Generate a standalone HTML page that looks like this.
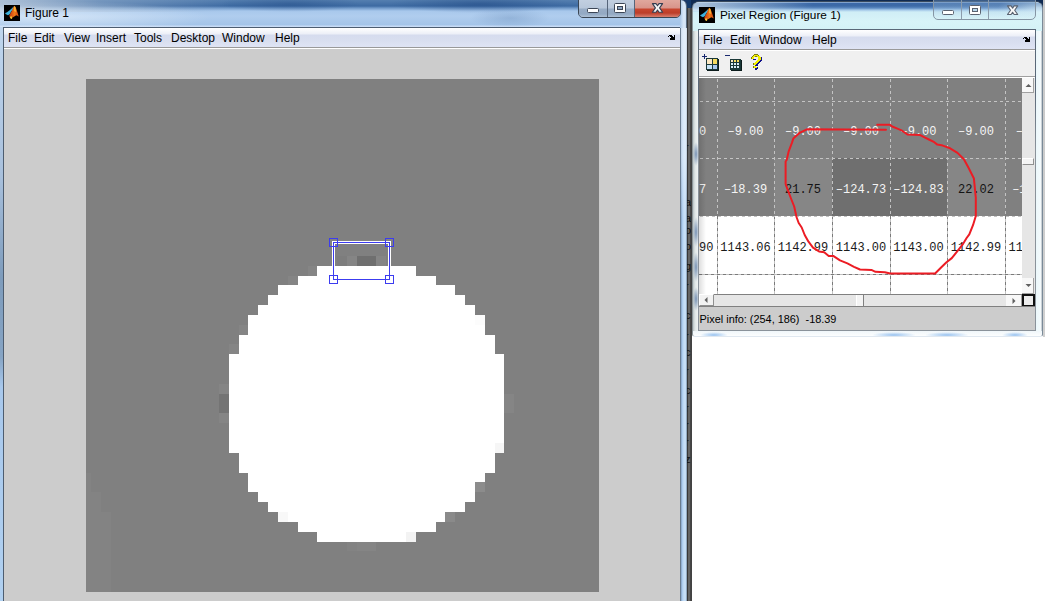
<!DOCTYPE html>
<html><head><meta charset="utf-8">
<style>
*{box-sizing:border-box}
html,body{margin:0;padding:0}
body{width:1045px;height:601px;position:relative;overflow:hidden;background:#fff;font-family:"Liberation Sans",sans-serif}
.a{position:absolute}
.t{position:absolute;white-space:pre;font-family:"Liberation Sans",sans-serif;font-size:12px;line-height:14px;color:#000}
.m{position:absolute;white-space:pre;font-family:"Liberation Mono",monospace;font-size:12px;line-height:14px;text-align:center;width:57px}
</style></head><body>

<!-- ===== Window 1 (Figure 1) ===== -->
<div class="a" style="left:0;top:0;width:687px;height:601px;background:linear-gradient(180deg,#557fb0 0px,#3d6aa2 6px,#6f98c8 8px,#a8c8ec 11px,#b0cdee 16px,#a4c4e8 25px,#c8dcf6 26px,#c0d6ef 40px,#bcd4ee 601px)"></div>
<div class="a" style="left:0;top:0;width:260px;height:12px;background:linear-gradient(90deg,rgba(190,205,222,0.85),rgba(150,175,205,0.5) 100px,rgba(120,150,190,0) 230px)"></div>
<div class="a" style="left:0;top:0;width:320px;height:27px;background:radial-gradient(ellipse 160px 16px at 50px 17px, rgba(240,248,255,0.55), rgba(240,248,255,0))"></div>
<div class="a" style="left:0;top:27px;width:3px;height:574px;background:linear-gradient(180deg,#c0d6ee 0,#a8c0dc 150px,#7e9cbc 250px,#86a4c4 330px,#a8c8ec 360px,#b0d0f0 574px)"></div>
<div class="a" style="left:150px;top:0;width:520px;height:27px;background:radial-gradient(ellipse 90px 9px at 330px 4px,rgba(25,65,125,0.45),rgba(25,65,125,0)),radial-gradient(ellipse 70px 8px at 140px 4px,rgba(25,65,125,0.35),rgba(25,65,125,0)),radial-gradient(ellipse 40px 10px at 360px 18px,rgba(70,110,160,0.25),rgba(70,110,160,0))"></div>
<!-- client border -->
<div class="a" style="left:3px;top:27px;width:678px;height:574px;background:#4d5d70"></div>
<!-- menu bar -->
<div class="a" style="left:4px;top:28px;width:676px;height:19px;background:linear-gradient(180deg,#ffffff 0px,#f6f7fb 3px,#eceff7 6px,#d6dcee 7px,#d8deef 12px,#dfe4f4 19px)"></div>
<div class="a" style="left:4px;top:47px;width:676px;height:1px;background:#9a9a9a"></div>
<div class="a" style="left:4px;top:48px;width:676px;height:1px;background:#ffffff"></div>
<div class="t" style="left:8px;top:31px">File</div>
<div class="t" style="left:34px;top:31px">Edit</div>
<div class="t" style="left:64px;top:31px">View</div>
<div class="t" style="left:96px;top:31px">Insert</div>
<div class="t" style="left:134px;top:31px">Tools</div>
<div class="t" style="left:171px;top:31px">Desktop</div>
<div class="t" style="left:222px;top:31px">Window</div>
<div class="t" style="left:275px;top:31px">Help</div>
<!-- dock arrow -->
<svg class="a" style="left:668px;top:35px" width="8" height="6" viewBox="0 0 8 6" shape-rendering="crispEdges"><path d="M1 0h1v1h-1zM2 0h1v1h-1zM3 0h1v1h-1zM6 0h1v1h-1zM0 1h1v1h-1zM2 1h1v1h-1zM3 1h1v1h-1zM4 1h1v1h-1zM6 1h1v1h-1zM3 2h1v1h-1zM4 2h1v1h-1zM5 2h1v1h-1zM6 2h1v1h-1zM2 3h1v1h-1zM3 3h1v1h-1zM4 3h1v1h-1zM5 3h1v1h-1zM6 3h1v1h-1zM2 4h1v1h-1zM3 4h1v1h-1zM4 4h1v1h-1zM5 4h1v1h-1zM6 4h1v1h-1z" fill="#000"/></svg>
<!-- figure gray area -->
<div class="a" style="left:4px;top:49px;width:676px;height:552px;background:#cccccc"></div>
<!-- image -->
<div class="a" style="left:86px;top:79px;width:513px;height:513px;background:#808080;overflow:hidden">
<div class="a" style="left:0px;top:394px;width:5px;height:119px;background:#838383"></div>
<div class="a" style="left:5px;top:413px;width:10px;height:100px;background:#838383"></div>
<div class="a" style="left:15px;top:433px;width:10px;height:80px;background:#838383"></div>
<div class="a" style="left:231px;top:187px;width:99px;height:10px;background:#ffffff"></div>
<div class="a" style="left:212px;top:197px;width:138px;height:9px;background:#ffffff"></div>
<div class="a" style="left:192px;top:206px;width:177px;height:10px;background:#ffffff"></div>
<div class="a" style="left:182px;top:216px;width:197px;height:10px;background:#ffffff"></div>
<div class="a" style="left:172px;top:226px;width:217px;height:10px;background:#ffffff"></div>
<div class="a" style="left:162px;top:236px;width:237px;height:10px;background:#ffffff"></div>
<div class="a" style="left:162px;top:246px;width:237px;height:10px;background:#ffffff"></div>
<div class="a" style="left:153px;top:256px;width:256px;height:9px;background:#ffffff"></div>
<div class="a" style="left:153px;top:265px;width:256px;height:10px;background:#ffffff"></div>
<div class="a" style="left:143px;top:275px;width:275px;height:10px;background:#ffffff"></div>
<div class="a" style="left:143px;top:285px;width:275px;height:10px;background:#ffffff"></div>
<div class="a" style="left:143px;top:295px;width:275px;height:10px;background:#ffffff"></div>
<div class="a" style="left:143px;top:305px;width:275px;height:10px;background:#ffffff"></div>
<div class="a" style="left:143px;top:315px;width:275px;height:10px;background:#ffffff"></div>
<div class="a" style="left:143px;top:325px;width:275px;height:9px;background:#ffffff"></div>
<div class="a" style="left:143px;top:334px;width:275px;height:10px;background:#ffffff"></div>
<div class="a" style="left:143px;top:344px;width:275px;height:10px;background:#ffffff"></div>
<div class="a" style="left:143px;top:354px;width:275px;height:10px;background:#ffffff"></div>
<div class="a" style="left:143px;top:364px;width:275px;height:10px;background:#ffffff"></div>
<div class="a" style="left:153px;top:374px;width:256px;height:10px;background:#ffffff"></div>
<div class="a" style="left:153px;top:384px;width:256px;height:10px;background:#ffffff"></div>
<div class="a" style="left:162px;top:394px;width:237px;height:9px;background:#ffffff"></div>
<div class="a" style="left:162px;top:403px;width:237px;height:10px;background:#ffffff"></div>
<div class="a" style="left:172px;top:413px;width:217px;height:10px;background:#ffffff"></div>
<div class="a" style="left:182px;top:423px;width:197px;height:10px;background:#ffffff"></div>
<div class="a" style="left:192px;top:433px;width:177px;height:10px;background:#ffffff"></div>
<div class="a" style="left:212px;top:443px;width:138px;height:10px;background:#ffffff"></div>
<div class="a" style="left:231px;top:453px;width:99px;height:10px;background:#ffffff"></div>
<div class="a" style="left:251px;top:177px;width:10px;height:10px;background:#7d7d7d"></div>
<div class="a" style="left:261px;top:177px;width:10px;height:10px;background:#858585"></div>
<div class="a" style="left:271px;top:177px;width:10px;height:10px;background:#6f6f6f"></div>
<div class="a" style="left:281px;top:177px;width:9px;height:10px;background:#6f6f6f"></div>
<div class="a" style="left:290px;top:177px;width:10px;height:10px;background:#858585"></div>
<div class="a" style="left:222px;top:187px;width:9px;height:10px;background:#858585"></div>
<div class="a" style="left:202px;top:197px;width:10px;height:9px;background:#858585"></div>
<div class="a" style="left:389px;top:236px;width:10px;height:10px;background:#fcfcfc"></div>
<div class="a" style="left:153px;top:246px;width:9px;height:10px;background:#858585"></div>
<div class="a" style="left:143px;top:265px;width:10px;height:10px;background:#858585"></div>
<div class="a" style="left:133px;top:305px;width:10px;height:10px;background:#858585"></div>
<div class="a" style="left:133px;top:315px;width:10px;height:10px;background:#747474"></div>
<div class="a" style="left:133px;top:325px;width:10px;height:9px;background:#747474"></div>
<div class="a" style="left:133px;top:334px;width:10px;height:10px;background:#858585"></div>
<div class="a" style="left:418px;top:315px;width:10px;height:10px;background:#858585"></div>
<div class="a" style="left:418px;top:325px;width:10px;height:9px;background:#858585"></div>
<div class="a" style="left:409px;top:364px;width:9px;height:10px;background:#f6f6f6"></div>
<div class="a" style="left:389px;top:403px;width:10px;height:10px;background:#8c8c8c"></div>
<div class="a" style="left:192px;top:433px;width:10px;height:10px;background:#f8f8f8"></div>
<div class="a" style="left:359px;top:433px;width:10px;height:10px;background:#8a8a8a"></div>
<div class="a" style="left:320px;top:453px;width:10px;height:10px;background:#f3f3f3"></div>
<div class="a" style="left:261px;top:463px;width:10px;height:9px;background:#838383"></div>
<div class="a" style="left:271px;top:463px;width:10px;height:9px;background:#858585"></div>
<div class="a" style="left:281px;top:463px;width:9px;height:9px;background:#858585"></div>
</div>
<!-- imrect -->
<svg class="a" style="left:320px;top:230px" width="80" height="60" viewBox="0 0 80 60">
<rect x="13.5" y="12.5" width="56" height="37" fill="none" stroke="#ffffff" stroke-width="3"/>
<rect x="13.5" y="12.5" width="56" height="37" fill="none" stroke="#3c3cf0" stroke-width="1"/>
<rect x="9.5" y="8.5" width="8" height="8" fill="none" stroke="#3c3cf0" stroke-width="1"/>
<rect x="65.5" y="8.5" width="8" height="8" fill="none" stroke="#3c3cf0" stroke-width="1"/>
<rect x="9.5" y="45.5" width="8" height="8" fill="none" stroke="#3c3cf0" stroke-width="1"/>
<rect x="65.5" y="45.5" width="8" height="8" fill="none" stroke="#3c3cf0" stroke-width="1"/>
</svg>

<!-- right frame of window1 -->
<div class="a" style="left:680px;top:27px;width:1px;height:574px;background:#6a7c90"></div>
<div class="a" style="left:681px;top:18px;width:6px;height:583px;background:linear-gradient(90deg,#7f9cc0 0,#a4c4e8 1px,#b8d6f4 2px,#cce2f8 4px,#bcd8f4 5px,#6a7c90 6px)"></div>
<div class="a" style="left:681px;top:18px;width:6px;height:200px;background:linear-gradient(180deg,rgba(240,246,252,0.7) 0,rgba(240,246,252,0.5) 140px,rgba(240,246,252,0) 200px)"></div>

<div class="a" style="left:680px;top:0;width:7px;height:28px;background:#1a3a6a"></div>
<div class="a" style="left:680px;top:0;width:7px;height:28px;border-top-right-radius:6px;border-right:1px solid #5a6c80;background:linear-gradient(90deg,#a8c4e4 0,#c4daf2 2px,#dceaf8 4px,#c8dcf2 6px)"></div>
<!-- title icon + text -->
<svg class="a" style="left:4px;top:5px" width="16" height="16" viewBox="0 0 16 16">
<defs><linearGradient id="og" x1="0" y1="0" x2="1" y2="0"><stop offset="0" stop-color="#c03810"/><stop offset="0.55" stop-color="#f07818"/><stop offset="1" stop-color="#d04810"/></linearGradient></defs>
<rect width="16" height="16" fill="#000"/>
<path d="M1 8.3 L3 7.3 L5.7 5.3 L8 3.3 L9.5 1.5 L9 4.5 L7 6.8 L6 9 L4 10.3 L2 9.3 Z" fill="#3cb0dc"/>
<path d="M10.3 0.8 L11.6 2 L13 6 L14.8 11.5 L12.3 10.3 L9 12.3 L7 13.8 L5.6 12 L5.3 10.3 L7.3 6.7 L9.3 2.3 Z" fill="url(#og)"/>
<path d="M10.3 1.2 L11.3 2 L11.8 7 L10.4 6 Z" fill="#fad040"/>
<path d="M5.8 11.8 L7.6 11.3 L8.2 13.4 L7 14 Z" fill="#f8d038"/>
</svg>
<div class="t" style="left:25px;top:6px">Figure 1</div>

<!-- caption buttons window1 -->
<div class="a" style="left:578px;top:-3px;width:103px;height:21px;border:1px solid #3a4654;border-radius:0 0 5px 5px;overflow:hidden;background:#8aa0bc">
  <div class="a" style="left:0;top:0;width:28px;height:20px;background:linear-gradient(180deg,#c4d1e2 0,#b8c7da 10px,#98acc5 11px,#93a9c3 16px,#b0c2d6 19px,#dce6f0 20px)"></div>
  <div class="a" style="left:28px;top:0;width:1px;height:20px;background:#56657a"></div>
  <div class="a" style="left:29px;top:0;width:26px;height:20px;background:linear-gradient(180deg,#c4d1e2 0,#b8c7da 10px,#98acc5 11px,#93a9c3 16px,#b0c2d6 19px,#dce6f0 20px)"></div>
  <div class="a" style="left:55px;top:0;width:1px;height:20px;background:#56657a"></div>
  <div class="a" style="left:56px;top:0;width:47px;height:20px;background:linear-gradient(180deg,#e2aca2 0,#d8948a 10px,#c84630 11px,#bc3e2a 15px,#d88070 19px,#f0b8a8 20px)"></div>
</div>
<svg class="a" style="left:578px;top:0" width="103" height="18" viewBox="0 0 103 18">
 <rect x="9.5" y="8.5" width="11" height="4" rx="1" fill="#fff" stroke="#3c4656" stroke-width="1"/>
 <rect x="36.5" y="3.5" width="11" height="9" rx="1" fill="#fff" stroke="#3c4656" stroke-width="1"/>
 <rect x="39.5" y="6.5" width="5" height="3" fill="#8ea5c1" stroke="#3c4656" stroke-width="1"/>
 <polygon points="74.4,3.6 78.0,3.6 79.5,5.8 81.0,3.6 84.6,3.6 81.6,7.9 84.6,12.2 81.0,12.2 79.5,10.0 78.0,12.2 74.4,12.2 77.4,7.9" fill="#f4f4f4" stroke="#343c50" stroke-width="1.1" stroke-linejoin="round"/>
</svg>

<!-- strip between windows -->
<div class="a" style="left:687px;top:0;width:5px;height:601px;background:linear-gradient(90deg,#383838 0,#383838 1px,#646464 1px,#646464 3px,#484848 3px,#404040 5px)"></div>

<div class="a" style="left:687px;top:0;width:5px;height:8px;background:#143a6c"></div>

<div class="a" style="left:687px;top:0;width:4px;height:601px;overflow:hidden"><div class="t" style="left:-2px;top:140px;font-size:11px;color:#101010">r</div><div class="t" style="left:-2px;top:195px;font-size:11px;color:#101010">a</div><div class="t" style="left:-2px;top:211px;font-size:11px;color:#101010">a</div><div class="t" style="left:-2px;top:223px;font-size:11px;color:#101010">o</div><div class="t" style="left:-2px;top:239px;font-size:11px;color:#101010">o</div><div class="t" style="left:-2px;top:259px;font-size:11px;color:#101010">g</div><div class="t" style="left:-2px;top:279px;font-size:11px;color:#101010">r</div><div class="t" style="left:-2px;top:308px;font-size:11px;color:#101010">c</div><div class="t" style="left:-2px;top:329px;font-size:11px;color:#101010">r</div><div class="t" style="left:-2px;top:345px;font-size:11px;color:#101010">c</div><div class="t" style="left:-2px;top:364px;font-size:11px;color:#101010">r</div><div class="t" style="left:-2px;top:383px;font-size:11px;color:#101010">c</div><div class="t" style="left:-2px;top:401px;font-size:11px;color:#101010">r</div><div class="t" style="left:-2px;top:418px;font-size:11px;color:#101010">r</div><div class="t" style="left:-2px;top:435px;font-size:11px;color:#101010">r</div><div class="t" style="left:-2px;top:452px;font-size:11px;color:#101010">z</div></div>
<!-- ===== Window 2 (Pixel Region) ===== -->
<div class="a" style="left:1043px;top:0;width:2px;height:337px;background:linear-gradient(180deg,#c8c8c8,#d0d0d0)"></div>
<div class="a" style="left:691px;top:0;width:352px;height:8px;background:#0f2a52"></div>
<div class="a" style="left:692px;top:1px;width:351px;height:336px;border-radius:7px 7px 3px 3px;border:1px solid #3a4a5c;border-bottom-color:#e0e8f0;border-left-color:#8a9498;border-right-color:#7a8a98;overflow:hidden;background:linear-gradient(90deg,#b8c2c4 0px,#dfe6e6 2px,#eef2f2 5px,#e8f4f8 50%,#e6f6fa 340px,#f4fafc 348px,#a0a8b0 349px)">
  <div class="a" style="left:0;top:0;width:349px;height:29px;background:linear-gradient(180deg,#c8dcf0 0px,#3a68a8 1px,#3d6aa6 4px,#5a88c0 6px,#a4c8e8 8px,#d0eef6 10px,#d8f4f8 20px,#d4f2f6 28px)"></div>
  <div class="a" style="left:0;top:0;width:120px;height:9px;background:linear-gradient(90deg,rgba(220,235,245,0.7),rgba(220,235,245,0) 120px)"></div>
  <div class="a" style="left:300px;top:0;width:49px;height:29px;background:radial-gradient(ellipse 40px 14px at 45px 6px,rgba(225,245,252,0.75),rgba(225,245,252,0))"></div>
  <div class="a" style="left:0;top:329px;width:349px;height:6px;background:linear-gradient(180deg,#f0f6fa,#ffffff)"></div><div class="a" style="left:0;top:140px;width:6px;height:24px;background:radial-gradient(ellipse 3px 12px at 3px 12px,rgba(100,130,170,0.85),rgba(110,140,175,0))"></div><div class="a" style="left:0;top:215px;width:6px;height:30px;background:radial-gradient(ellipse 3px 15px at 3px 15px,rgba(100,130,170,0.85),rgba(110,140,175,0))"></div><div class="a" style="left:0;top:250px;width:6px;height:30px;background:radial-gradient(ellipse 3px 15px at 3px 15px,rgba(100,130,170,0.85),rgba(110,140,175,0))"></div><div class="a" style="left:0;top:285px;width:6px;height:24px;background:radial-gradient(ellipse 3px 12px at 3px 12px,rgba(100,130,170,0.85),rgba(110,140,175,0))"></div>
  <div class="a" style="left:7px;top:330px;width:28px;height:6px;background:radial-gradient(ellipse at center,rgba(120,175,235,0.75),rgba(120,175,235,0) 70%)"></div><div class="a" style="left:179px;top:330px;width:44px;height:6px;background:radial-gradient(ellipse at center,rgba(120,175,235,0.75),rgba(120,175,235,0) 70%)"></div><div class="a" style="left:232px;top:330px;width:44px;height:6px;background:radial-gradient(ellipse at center,rgba(120,175,235,0.75),rgba(120,175,235,0) 70%)"></div><div class="a" style="left:309px;top:330px;width:26px;height:6px;background:radial-gradient(ellipse at center,rgba(120,175,235,0.75),rgba(120,175,235,0) 70%)"></div>
</div>
<!-- w2 title -->
<svg class="a" style="left:699px;top:7px" width="16" height="16" viewBox="0 0 16 16">
<defs><linearGradient id="og2" x1="0" y1="0" x2="1" y2="0"><stop offset="0" stop-color="#c03810"/><stop offset="0.55" stop-color="#f07818"/><stop offset="1" stop-color="#d04810"/></linearGradient></defs>
<rect width="16" height="16" fill="#000"/>
<path d="M1 8.3 L3 7.3 L5.7 5.3 L8 3.3 L9.5 1.5 L9 4.5 L7 6.8 L6 9 L4 10.3 L2 9.3 Z" fill="#3cb0dc"/>
<path d="M10.3 0.8 L11.6 2 L13 6 L14.8 11.5 L12.3 10.3 L9 12.3 L7 13.8 L5.6 12 L5.3 10.3 L7.3 6.7 L9.3 2.3 Z" fill="url(#og2)"/>
<path d="M10.3 1.2 L11.3 2 L11.8 7 L10.4 6 Z" fill="#fad040"/>
<path d="M5.8 11.8 L7.6 11.3 L8.2 13.4 L7 14 Z" fill="#f8d038"/>
</svg>
<div class="t" style="left:720px;top:8px;font-size:11.8px">Pixel Region (Figure 1)</div>
<!-- w2 caption buttons -->
<div class="a" style="left:933px;top:-3px;width:103px;height:23px;border:1px solid #8595a4;border-radius:0 0 5px 5px;background:linear-gradient(180deg,rgba(90,130,180,0.55) 0,rgba(160,195,225,0.35) 10px,rgba(230,248,252,0.2) 22px)"></div>
<div class="a" style="left:961px;top:0;width:1px;height:19px;background:#8c9cac"></div>
<div class="a" style="left:988px;top:0;width:1px;height:19px;background:#8c9cac"></div>
<svg class="a" style="left:933px;top:0" width="103" height="20" viewBox="0 0 103 20">
 <rect x="9.5" y="10.5" width="11" height="4" rx="1" fill="#fff" stroke="#5a6270" stroke-width="1"/>
 <rect x="36.5" y="5.5" width="11" height="9" rx="1" fill="#fff" stroke="#5a6270" stroke-width="1"/>
 <rect x="39.5" y="8.5" width="5" height="3" fill="#b8d8ec" stroke="#5a6270" stroke-width="1"/>
 <polygon points="74.5,5.9 78.1,5.9 79.6,8.1 81.1,5.9 84.7,5.9 81.7,10.2 84.7,14.5 81.1,14.5 79.6,12.3 78.1,14.5 74.5,14.5 77.5,10.2" fill="#f8f8f8" stroke="#5a6270" stroke-width="1.1" stroke-linejoin="round"/>
</svg>
<!-- w2 client border -->
<div class="a" style="left:698px;top:29px;width:338px;height:302px;background:linear-gradient(180deg,#5a6878 0,#5a6878 60px,#8a929a 120px)"></div>
<!-- w2 menu -->
<div class="a" style="left:699px;top:30px;width:336px;height:19px;background:linear-gradient(180deg,#ffffff 0px,#f6f7fb 3px,#eceff7 6px,#d6dcee 7px,#d8deef 12px,#dfe4f4 19px)"></div>
<div class="a" style="left:699px;top:49px;width:336px;height:1px;background:#9a9a9a"></div>
<div class="t" style="left:703px;top:33px">File</div>
<div class="t" style="left:730px;top:33px">Edit</div>
<div class="t" style="left:759px;top:33px">Window</div>
<div class="t" style="left:812px;top:33px">Help</div>
<svg class="a" style="left:1023px;top:37px" width="8" height="6" viewBox="0 0 8 6" shape-rendering="crispEdges"><path d="M1 0h1v1h-1zM2 0h1v1h-1zM3 0h1v1h-1zM6 0h1v1h-1zM0 1h1v1h-1zM2 1h1v1h-1zM3 1h1v1h-1zM4 1h1v1h-1zM6 1h1v1h-1zM3 2h1v1h-1zM4 2h1v1h-1zM5 2h1v1h-1zM6 2h1v1h-1zM2 3h1v1h-1zM3 3h1v1h-1zM4 3h1v1h-1zM5 3h1v1h-1zM6 3h1v1h-1zM2 4h1v1h-1zM3 4h1v1h-1zM4 4h1v1h-1zM5 4h1v1h-1zM6 4h1v1h-1z" fill="#000"/></svg>
<!-- toolbar -->
<div class="a" style="left:699px;top:50px;width:336px;height:27px;background:#f0f0f0"></div>
<div class="a" style="left:699px;top:50px;width:336px;height:1px;background:#ffffff"></div>
<div class="a" style="left:699px;top:76px;width:336px;height:1px;background:#a0a0a0"></div>
<div class="a" style="left:699px;top:77px;width:336px;height:1px;background:#ffffff"></div>
<svg class="a" style="left:700px;top:52px" width="70" height="22" viewBox="0 0 70 22">
 <path d="M2 4.5 H7 M4.5 2 V7" stroke="#1a2a70" stroke-width="1"/>
 <rect x="7" y="7" width="12" height="12" fill="#0c1c1c"/>
 <rect x="6" y="6" width="12" height="12" fill="#1a3838"/>
 <rect x="7" y="7" width="5" height="5" fill="#fbe8c4"/>
 <rect x="13" y="7" width="4" height="5" fill="#f6dc60"/>
 <rect x="7" y="13" width="5" height="4" fill="#c6e2f6"/>
 <rect x="13" y="13" width="4" height="4" fill="#a8c8ee"/>
 <path d="M25 3.5 H30" stroke="#1a2a70" stroke-width="1"/>
 <rect x="31" y="8" width="11" height="11" fill="#0c1c1c"/>
 <rect x="30" y="7" width="11" height="11" fill="#1a3838"/>
 <g fill="#d8ecf6">
 <rect x="31" y="8" width="2" height="2" fill="#fbe8c4"/><rect x="34" y="8" width="2" height="2" fill="#f6dc60"/><rect x="37" y="8" width="2" height="2" fill="#f6dc60"/>
 <rect x="31" y="11" width="2" height="2"/><rect x="34" y="11" width="2" height="2"/><rect x="37" y="11" width="2" height="2"/>
 <rect x="31" y="14" width="2" height="2"/><rect x="34" y="14" width="2" height="2"/><rect x="37" y="14" width="2" height="2"/>
 </g>
 <g transform="translate(48,0)" shape-rendering="crispEdges"><path d="M6 2h1v1h-1zM7 2h1v1h-1zM8 2h1v1h-1zM9 2h1v1h-1zM5 3h1v1h-1zM10 3h1v1h-1zM4 4h1v1h-1zM7 4h1v1h-1zM8 4h1v1h-1zM3 5h1v1h-1zM3 6h1v1h-1zM5 11h1v1h-1zM5 12h1v1h-1zM5 14h1v1h-1zM5 15h1v1h-1z" fill="#7a7a10"/><path d="M13 5h1v1h-1zM13 6h1v1h-1zM5 7h1v1h-1zM6 7h1v1h-1zM7 7h1v1h-1zM13 7h1v1h-1zM12 8h1v1h-1zM13 8h1v1h-1zM11 9h1v1h-1zM12 9h1v1h-1zM10 10h1v1h-1zM11 10h1v1h-1zM9 11h1v1h-1zM10 11h1v1h-1zM8 12h1v1h-1zM9 12h1v1h-1zM7 13h1v1h-1zM8 13h1v1h-1zM9 13h1v1h-1zM9 15h1v1h-1zM7 16h1v1h-1zM8 16h1v1h-1zM9 16h1v1h-1zM7 17h1v1h-1zM8 17h1v1h-1z" fill="#10108a"/><path d="M6 3h1v1h-1zM7 3h1v1h-1zM8 3h1v1h-1zM9 3h1v1h-1zM5 4h1v1h-1zM6 4h1v1h-1zM9 4h1v1h-1zM10 4h1v1h-1zM11 4h1v1h-1zM4 5h1v1h-1zM5 5h1v1h-1zM10 5h1v1h-1zM11 5h1v1h-1zM12 5h1v1h-1zM4 6h1v1h-1zM5 6h1v1h-1zM10 6h1v1h-1zM11 6h1v1h-1zM12 6h1v1h-1zM10 7h1v1h-1zM11 7h1v1h-1zM12 7h1v1h-1zM9 8h1v1h-1zM10 8h1v1h-1zM11 8h1v1h-1zM8 9h1v1h-1zM9 9h1v1h-1zM10 9h1v1h-1zM7 10h1v1h-1zM8 10h1v1h-1zM9 10h1v1h-1zM6 11h1v1h-1zM7 11h1v1h-1zM8 11h1v1h-1zM6 12h1v1h-1zM7 12h1v1h-1zM6 14h1v1h-1zM7 14h1v1h-1zM6 15h1v1h-1zM7 15h1v1h-1zM8 15h1v1h-1z" fill="#f4f000"/></g>
</svg>

<!-- table -->
<div class="a" id="tbl" style="left:699px;top:78px;width:323px;height:216px;background:#808080;overflow:hidden">
<div class="a" style="left:18px;top:80px;width:57px;height:58px;background:#7e7e7e"></div>
<div class="a" style="left:75px;top:80px;width:58px;height:58px;background:#868686"></div>
<div class="a" style="left:133px;top:80px;width:58px;height:58px;background:#6f6f6f"></div>
<div class="a" style="left:191px;top:80px;width:57px;height:58px;background:#6f6f6f"></div>
<div class="a" style="left:248px;top:80px;width:58px;height:58px;background:#868686"></div>
<div class="a" style="left:-39px;top:138px;width:57px;height:58px;background:#ffffff"></div>
<div class="a" style="left:18px;top:138px;width:57px;height:58px;background:#ffffff"></div>
<div class="a" style="left:75px;top:138px;width:58px;height:58px;background:#ffffff"></div>
<div class="a" style="left:133px;top:138px;width:58px;height:58px;background:#ffffff"></div>
<div class="a" style="left:191px;top:138px;width:57px;height:58px;background:#ffffff"></div>
<div class="a" style="left:248px;top:138px;width:58px;height:58px;background:#ffffff"></div>
<div class="a" style="left:306px;top:138px;width:57px;height:58px;background:#ffffff"></div>
<div class="a" style="left:-39px;top:196px;width:57px;height:57px;background:#ffffff"></div>
<div class="a" style="left:18px;top:196px;width:57px;height:57px;background:#ffffff"></div>
<div class="a" style="left:75px;top:196px;width:58px;height:57px;background:#ffffff"></div>
<div class="a" style="left:133px;top:196px;width:58px;height:57px;background:#ffffff"></div>
<div class="a" style="left:191px;top:196px;width:57px;height:57px;background:#ffffff"></div>
<div class="a" style="left:248px;top:196px;width:58px;height:57px;background:#ffffff"></div>
<div class="a" style="left:306px;top:196px;width:57px;height:57px;background:#ffffff"></div>
<div class="m" style="left:-39.25px;top:-11px;color:#f4f4f4">&#x2013;9.00</div>
<div class="m" style="left:18.00px;top:-11px;color:#f4f4f4">&#x2013;9.00</div>
<div class="m" style="left:75.50px;top:-11px;color:#f4f4f4">&#x2013;9.00</div>
<div class="m" style="left:133.50px;top:-11px;color:#f4f4f4">&#x2013;9.00</div>
<div class="m" style="left:191.00px;top:-11px;color:#f4f4f4">&#x2013;9.00</div>
<div class="m" style="left:248.50px;top:-11px;color:#f4f4f4">&#x2013;9.00</div>
<div class="m" style="left:306.25px;top:-11px;color:#f4f4f4">&#x2013;9.00</div>
<div class="m" style="left:-39.25px;top:47px;color:#f4f4f4">&#x2013;9.00</div>
<div class="m" style="left:18.00px;top:47px;color:#f4f4f4">&#x2013;9.00</div>
<div class="m" style="left:75.50px;top:47px;color:#f4f4f4">&#x2013;9.00</div>
<div class="m" style="left:133.50px;top:47px;color:#f4f4f4">&#x2013;9.00</div>
<div class="m" style="left:191.00px;top:47px;color:#f4f4f4">&#x2013;9.00</div>
<div class="m" style="left:248.50px;top:47px;color:#f4f4f4">&#x2013;9.00</div>
<div class="m" style="left:306.25px;top:47px;color:#f4f4f4">&#x2013;9.00</div>
<div class="m" style="left:-39.25px;top:105px;color:#f4f4f4">&#x2013;9.47</div>
<div class="m" style="left:18.00px;top:105px;color:#f4f4f4">&#x2013;18.39</div>
<div class="m" style="left:75.50px;top:105px;color:#141414">21.75</div>
<div class="m" style="left:133.50px;top:105px;color:#f4f4f4">&#x2013;124.73</div>
<div class="m" style="left:191.00px;top:105px;color:#f4f4f4">&#x2013;124.83</div>
<div class="m" style="left:248.50px;top:105px;color:#141414">22.02</div>
<div class="m" style="left:306.25px;top:105px;color:#f4f4f4">&#x2013;18.47</div>
<div class="m" style="left:-39.25px;top:163px;color:#1a1a1a">1142.90</div>
<div class="m" style="left:18.00px;top:163px;color:#1a1a1a">1143.06</div>
<div class="m" style="left:75.50px;top:163px;color:#1a1a1a">1142.99</div>
<div class="m" style="left:133.50px;top:163px;color:#1a1a1a">1143.00</div>
<div class="m" style="left:191.00px;top:163px;color:#1a1a1a">1143.00</div>
<div class="m" style="left:248.50px;top:163px;color:#1a1a1a">1142.99</div>
<div class="m" style="left:306.25px;top:163px;color:#1a1a1a">1143.06</div>
<div class="m" style="left:-39.25px;top:221px;color:#1a1a1a">1143.00</div>
<div class="m" style="left:18.00px;top:221px;color:#1a1a1a">1143.00</div>
<div class="m" style="left:75.50px;top:221px;color:#1a1a1a">1143.00</div>
<div class="m" style="left:133.50px;top:221px;color:#1a1a1a">1143.00</div>
<div class="m" style="left:191.00px;top:221px;color:#1a1a1a">1143.00</div>
<div class="m" style="left:248.50px;top:221px;color:#1a1a1a">1143.00</div>
<div class="m" style="left:306.25px;top:221px;color:#1a1a1a">1143.00</div>
<svg class="a" style="left:0;top:0" width="323" height="216"><line x1="18.5" y1="0" x2="18.5" y2="138" stroke="#c4c4c4" stroke-dasharray="3 3" stroke-dashoffset="5"/><line x1="18.5" y1="138" x2="18.5" y2="216" stroke="#c0c0c0"/><line x1="18.5" y1="138" x2="18.5" y2="216" stroke="#7a7a7a" stroke-dasharray="3 3"/><line x1="75.5" y1="0" x2="75.5" y2="138" stroke="#c4c4c4" stroke-dasharray="3 3" stroke-dashoffset="5"/><line x1="75.5" y1="138" x2="75.5" y2="216" stroke="#c0c0c0"/><line x1="75.5" y1="138" x2="75.5" y2="216" stroke="#7a7a7a" stroke-dasharray="3 3"/><line x1="133.5" y1="0" x2="133.5" y2="138" stroke="#c4c4c4" stroke-dasharray="3 3" stroke-dashoffset="5"/><line x1="133.5" y1="138" x2="133.5" y2="216" stroke="#c0c0c0"/><line x1="133.5" y1="138" x2="133.5" y2="216" stroke="#7a7a7a" stroke-dasharray="3 3"/><line x1="191.5" y1="0" x2="191.5" y2="138" stroke="#c4c4c4" stroke-dasharray="3 3" stroke-dashoffset="5"/><line x1="191.5" y1="138" x2="191.5" y2="216" stroke="#c0c0c0"/><line x1="191.5" y1="138" x2="191.5" y2="216" stroke="#7a7a7a" stroke-dasharray="3 3"/><line x1="248.5" y1="0" x2="248.5" y2="138" stroke="#c4c4c4" stroke-dasharray="3 3" stroke-dashoffset="5"/><line x1="248.5" y1="138" x2="248.5" y2="216" stroke="#c0c0c0"/><line x1="248.5" y1="138" x2="248.5" y2="216" stroke="#7a7a7a" stroke-dasharray="3 3"/><line x1="306.5" y1="0" x2="306.5" y2="138" stroke="#c4c4c4" stroke-dasharray="3 3" stroke-dashoffset="5"/><line x1="306.5" y1="138" x2="306.5" y2="216" stroke="#c0c0c0"/><line x1="306.5" y1="138" x2="306.5" y2="216" stroke="#7a7a7a" stroke-dasharray="3 3"/><line x1="0" y1="23.5" x2="323" y2="23.5" stroke="#c4c4c4" stroke-dasharray="3 3" stroke-dashoffset="5"/><line x1="0" y1="80.5" x2="323" y2="80.5" stroke="#c4c4c4" stroke-dasharray="3 3" stroke-dashoffset="5"/><line x1="0" y1="138.5" x2="323" y2="138.5" stroke="#c4c4c4" stroke-dasharray="3 3" stroke-dashoffset="5"/><line x1="0" y1="196.5" x2="323" y2="196.5" stroke="#c0c0c0"/><line x1="0" y1="196.5" x2="323" y2="196.5" stroke="#7a7a7a" stroke-dasharray="3 3"/></svg>
</div>

<div class="a" style="left:699px;top:78px;width:7px;height:216px;background:linear-gradient(90deg,rgba(0,0,0,0.13),rgba(0,0,0,0))"></div>
<!-- vertical scrollbar -->
<div class="a" style="left:1022px;top:78px;width:13px;height:216px;background:#e6e6e6"></div>
<div class="a" style="left:1022px;top:78px;width:12px;height:15px;background:#f8f8f8;border-right:1px solid #a0a0a0;border-bottom:1px solid #a0a0a0"></div>
<svg class="a" style="left:1022px;top:78px" width="13" height="15"><path d="M3.5 9 L6.5 6 L9.5 9 Z" fill="#606060"/></svg>
<div class="a" style="left:1022px;top:158px;width:12px;height:7px;background:#f4f4f4;border-left:1px solid #fff;border-top:1px solid #fff;border-right:1px solid #909090;border-bottom:1px solid #909090"></div>
<div class="a" style="left:1022px;top:278px;width:12px;height:16px;background:#f8f8f8;border-right:1px solid #a0a0a0;border-bottom:1px solid #a0a0a0"></div>
<svg class="a" style="left:1022px;top:278px" width="13" height="16"><path d="M3.5 6 L6.5 9 L9.5 6 Z" fill="#606060"/></svg>
<!-- horizontal scrollbar -->
<div class="a" style="left:699px;top:294px;width:323px;height:13px;background:#e6e6e6;border-top:1px solid #808080;border-bottom:1px solid #808080"></div>
<div class="a" style="left:699px;top:294px;width:15px;height:12px;background:#f2f2f2;border-left:1px solid #fff;border-top:1px solid #fff;border-right:1px solid #909090;border-bottom:1px solid #909090"></div>
<svg class="a" style="left:698px;top:294px" width="16" height="12"><path d="M9.5 3 L6.5 6 L9.5 9 Z" fill="#606060"/></svg>
<div class="a" style="left:856px;top:295px;width:8px;height:12px;background:#f4f4f4;border-left:1px solid #fff;border-right:1px solid #808080;border-bottom:1px solid #808080"></div>
<div class="a" style="left:1006px;top:295px;width:16px;height:12px;background:#f8f8f8;border-right:1px solid #a0a0a0;border-bottom:1px solid #a0a0a0"></div>
<svg class="a" style="left:1006px;top:295px" width="16" height="12"><path d="M6.5 3 L9.5 6 L6.5 9 Z" fill="#606060"/></svg>
<div class="a" style="left:1022px;top:294px;width:13px;height:13px;background:#ececec;border:2px solid #101010"></div>
<!-- status bar -->
<div class="a" style="left:699px;top:306px;width:336px;height:24px;background:#cccccc;border-top:1px solid #808080"></div>
<div class="t" style="left:699.6px;top:311.5px;font-size:10.9px">Pixel info: (254, 186)  -18.39</div>

<!-- red hand-drawn circle -->
<svg class="a" style="left:0;top:0" width="1045" height="601" viewBox="0 0 1045 601">
<polyline fill="none" stroke="#ec1c24" stroke-width="2" stroke-linejoin="round" stroke-linecap="round" points="886,129.8 807,129.3 800,132.6 793.3,138.6 792,142.6 788.7,151.3 786.7,160 785.6,161.5 785.6,184 788,190.6 791.2,199 794.2,206.5 796.5,217 798.7,223 801.7,227.5 804.7,235 808.5,241.7 813,247.7 819,251.4 824.2,252.2 828.7,255.9 833.2,255.9 840,260.4 847.4,263.4 854,266.8 860,269.5 871.4,269.9 875.5,271.8 884.8,272.2 890.2,273.5 935.1,273.5 941.1,267.5 946.5,262.2 951.8,258.1 957.2,251.4 962.5,244.7 966.6,238 969.3,234.3 973,225.2 975.8,216 975.8,197.7 973.9,178.5 968.4,167.5 963.9,159.3 957.5,152.9 950.1,148.3 942.8,145.6 937.3,144.6 934.3,142.2 928.9,139.5 923.6,136.8 919.7,134.9 907.5,134.5 902.1,130.7 896.8,128.4 892.2,126.5 889.9,124.7 877.2,124.7"/>
</svg>

</body></html>
